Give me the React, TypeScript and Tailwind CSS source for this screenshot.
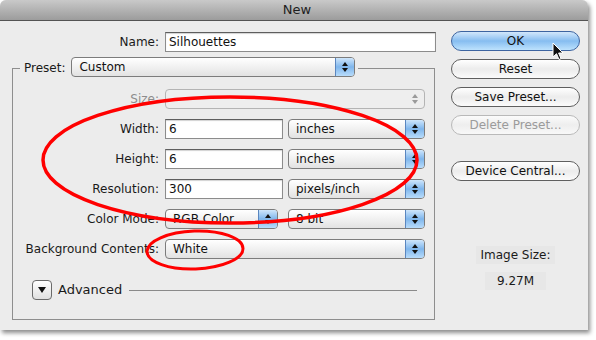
import React from 'react';

const Arrows = ({ disabled = false }: { disabled?: boolean }) => (
  <svg width="8" height="12" viewBox="0 0 8 12">
    <path d="M4 1 L7 5 L1 5 Z" fill={disabled ? '#9a9a9a' : '#111'} />
    <path d="M4 11 L7 7 L1 7 Z" fill={disabled ? '#9a9a9a' : '#111'} />
  </svg>
);

const Popup = ({ value, width, disabled = false }: { value: string; width: string; disabled?: boolean }) => (
  <div
    className={`${width} flex h-[20px] items-stretch overflow-hidden rounded-[4px] border ${
      disabled ? 'border-[#b4b4b4] bg-[#eeeeee]' : 'border-[#7c7c7c] bg-linear-to-b from-[#ffffff] via-[#f1f1f1] to-[#e2e2e2]'
    }`}
  >
    <span className="flex-1 truncate pl-[7px] leading-[18px] text-[#111]">{value}</span>
    {disabled ? (
      <span className="flex w-[19px] items-center justify-center">
        <Arrows disabled />
      </span>
    ) : (
      <span className="flex w-[19px] items-center justify-center border-l border-[#5a86bf] bg-linear-to-b from-[#cfe6fb] via-[#7fb6ec] to-[#b8dcfb]">
        <Arrows />
      </span>
    )}
  </div>
);

const TextField = ({ value, width }: { value: string; width: string }) => (
  <div className={`${width} h-[20px] border border-[#8c8c8c] border-t-[#5e5e5e] bg-white pl-[3px] leading-[18px] text-[#111] shadow-[inset_0_1px_1px_rgba(0,0,0,0.18)]`}>
    {value}
  </div>
);

const AquaButton = ({ label, primary = false, disabled = false }: { label: string; primary?: boolean; disabled?: boolean }) => (
  <div
    className={`flex h-[20px] w-[129px] items-center justify-center rounded-full border ${
      primary
        ? 'border-[#3d64a0] bg-linear-to-b from-[#d2e7fb] via-[#86bdf0] to-[#bde2fd] text-[#111]'
        : disabled
          ? 'border-[#b9b9b9] bg-linear-to-b from-[#fbfbfb] via-[#eeeeee] to-[#f8f8f8] text-[#9b9b9b]'
          : 'border-[#5f5f5f] bg-linear-to-b from-[#ffffff] via-[#ececec] to-[#fbfbfb] text-[#111]'
    }`}
  >
    {label}
  </div>
);

const Row = ({ label, children, muted = false }: { label: string; children: React.ReactNode; muted?: boolean }) => (
  <div className="flex h-[20px] items-center gap-[6px]">
    <span className={`w-[146px] text-right ${muted ? 'text-[#8d8d8d]' : 'text-[#1a1a1a]'}`}>{label}</span>
    {children}
  </div>
);

export default function App() {
  return (
    <div className="relative h-[340px] w-[596px] overflow-hidden bg-white font-['DejaVu_Sans',sans-serif] text-[12px]">
      <div className="flex h-[330px] w-[588px] flex-col overflow-hidden rounded-t-[6px] bg-[#ececec] shadow-[2px_3px_4px_rgba(0,0,0,0.45)]">
        {/* Title bar */}
        <div className="flex h-[21px] items-center justify-center border-b border-[#545454] bg-linear-to-b from-[#c9c9c9] to-[#9c9c9c] pl-[6px] text-[13px] text-[#1e1e1e]">
          New
        </div>

        <div className="flex flex-1">
          {/* Left side */}
          <div className="w-[451px] pt-[11px]">
            <div className="flex h-[20px] items-center gap-[6px]">
              <span className="w-[159px] text-right text-[#1a1a1a]">Name:</span>
              <TextField value="Silhouettes" width="w-[271px]" />
            </div>

            <div className="ml-[12px] mt-[16px] h-[252px] w-[423px] border border-[#8e8e8e]">
              <div className="-mt-[12px] ml-[7px] flex w-[338px] items-center gap-[6px] bg-[#ececec] px-[4px]">
                <span className="text-[#1a1a1a]">Preset:</span>
                <div className="h-[21px] flex-1">
                  <Popup value="Custom" width="w-[284px]" />
                </div>
              </div>

              <div className="mt-[11px] flex flex-col gap-[10px]">
                <Row label="Size:" muted>
                  <Popup value="" width="w-[260px]" disabled />
                </Row>
                <Row label="Width:">
                  <TextField value="6" width="w-[118px]" />
                  <div className="ml-[-1px]">
                    <Popup value="inches" width="w-[137px]" />
                  </div>
                </Row>
                <Row label="Height:">
                  <TextField value="6" width="w-[118px]" />
                  <div className="ml-[-1px]">
                    <Popup value="inches" width="w-[137px]" />
                  </div>
                </Row>
                <Row label="Resolution:">
                  <TextField value="300" width="w-[118px]" />
                  <div className="ml-[-1px]">
                    <Popup value="pixels/inch" width="w-[137px]" />
                  </div>
                </Row>
                <Row label="Color Mode:">
                  <Popup value="RGB Color" width="w-[113px]" />
                  <div className="ml-[4px]">
                    <Popup value="8 bit" width="w-[137px]" />
                  </div>
                </Row>
                <Row label="Background Contents:">
                  <Popup value="White" width="w-[260px]" />
                </Row>
              </div>

              <div className="mt-[21px] flex h-[20px] items-center pl-[19px] pr-[17px]">
                <div className="flex h-[20px] w-[20px] items-center justify-center rounded-[4px] border border-[#6a6a6a] bg-linear-to-b from-[#ffffff] to-[#e0e0e0]">
                  <svg width="8" height="6" viewBox="0 0 8 6">
                    <path d="M0 0 L8 0 L4 6 Z" fill="#111" />
                  </svg>
                </div>
                <span className="ml-[6px] text-[13px] text-[#1a1a1a]">Advanced</span>
                <div className="ml-[7px] h-px flex-1 bg-[#8a8a8a]" />
              </div>
            </div>
          </div>

          {/* Right side */}
          <div className="flex w-[129px] flex-col items-center pt-[10px]">
            <div className="flex flex-col gap-[8px]">
              <AquaButton label="OK" primary />
              <AquaButton label="Reset" />
              <AquaButton label="Save Preset..." />
              <AquaButton label="Delete Preset..." disabled />
            </div>
            <div className="mt-[26px]">
              <AquaButton label="Device Central..." />
            </div>
            <div className="mt-[65px] bg-[#e7e7e7] px-[4px] text-[#1a1a1a]">Image Size:</div>
            <div className="mt-[8px] bg-[#e7e7e7] px-[12px] text-[#1a1a1a]">9.27M</div>
          </div>
        </div>
      </div>

      {/* Red annotation ellipses */}
      <svg className="pointer-events-none absolute left-0 top-0" width="596" height="340" viewBox="0 0 596 340">
        <ellipse cx="230" cy="160" rx="187" ry="63" fill="none" stroke="#f00" strokeWidth="3.5" />
        <ellipse cx="195" cy="250" rx="48" ry="19" fill="none" stroke="#f00" strokeWidth="3" transform="rotate(-2 195 250)" />
      </svg>

      {/* Mouse pointer */}
      <svg className="pointer-events-none absolute left-[552px] top-[42px]" width="13" height="20" viewBox="0 0 13 20">
        <path d="M1 1 L1 15 L4.5 11.7 L7 17.5 L9 16.6 L6.6 11 L11 11 Z" fill="#111" stroke="#fff" strokeWidth="1" strokeLinejoin="round" />
      </svg>
    </div>
  );
}
